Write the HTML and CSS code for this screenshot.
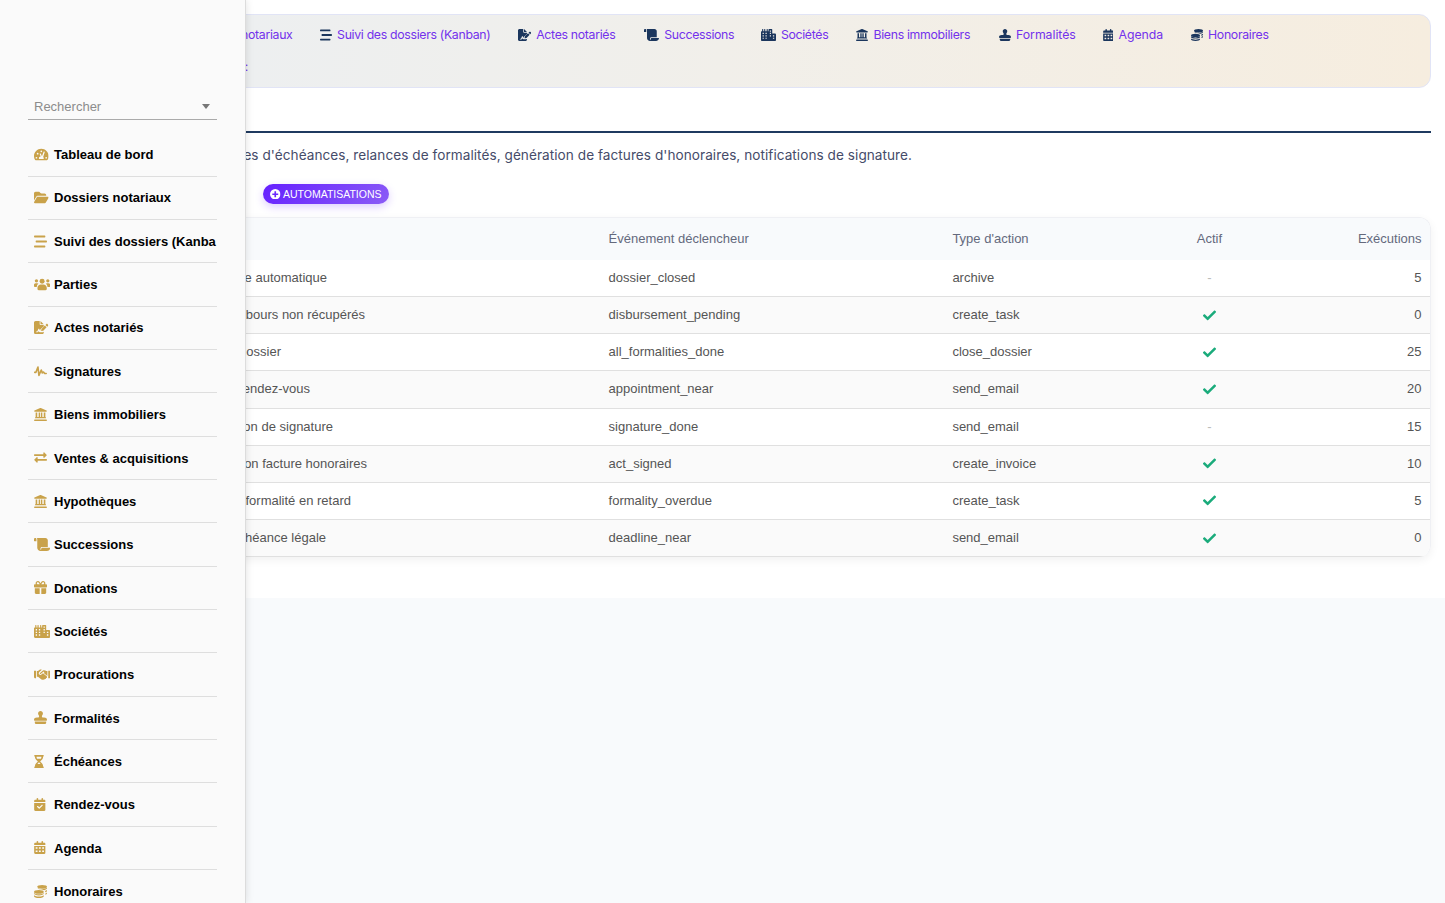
FILE: index.html
```html
<!DOCTYPE html>
<html lang="fr">
<head>
<meta charset="utf-8">
<title>Automatisations</title>
<link rel="stylesheet" href="styles.css">
</head>
<body>
<svg class="sprite" aria-hidden="true">
  <symbol id="gauge" viewBox="0 0 576 512"><path fill-rule="evenodd" d="M288 32C129 32 0 161 0 320c0 53 14 102 39 145 6 10 16 15 28 15h442c12 0 22-5 28-15 25-43 39-92 39-145C576 161 447 32 288 32zm0 64a34 34 0 1 1 0 68 34 34 0 0 1 0-68zM96 350a34 34 0 1 1 0 68 34 34 0 0 1 0-68zm48-160a34 34 0 1 1 0 68 34 34 0 0 1 0-68zm336 160a34 34 0 1 1 0 68 34 34 0 0 1 0-68zM405 138c14 4 21 18 17 31l-62 184c15 12 24 29 24 48 0 12-3 22-8 31H200c-5-9-8-19-8-31 0-35 28-64 63-64h12l-40-92c-5-12 0-26 12-31s26 0 31 12l42 97 62-169c4-13 18-20 31-16z"/></symbol>
  <symbol id="folder" viewBox="0 0 576 512"><path d="M88.7 223.8L0 375.8V96C0 60.7 28.7 32 64 32H181.5c17 0 33.3 6.7 45.3 18.7l26.5 26.5c12 12 28.3 18.7 45.3 18.7H416c35.3 0 64 28.7 64 64v32H144c-22.8 0-43.8 12.1-55.3 31.8zm27.6 16.1C122.1 230 132.6 224 144 224H544c11.5 0 22 6.1 27.7 16.1s5.7 22.2-.1 32.1l-112 192C453.9 474 443.4 480 432 480H32c-11.5 0-22-6.1-27.7-16.1s-5.7-22.2.1-32.1z"/></symbol>
  <symbol id="bars" viewBox="0 0 512 512"><path d="M0 60c0-24 10-40 26-40h396c16 0 26 16 26 40s-10 40-26 40H26C10 100 0 84 0 60zM64 256c0-24 10-40 26-40h396c16 0 26 16 26 40s-10 40-26 40H90c-16 0-26-16-26-40zM448 452c0 24-10 40-26 40H26c-16 0-26-16-26-40s10-40 26-40h396c16 0 26 16 26 40z"/></symbol>
  <symbol id="users" viewBox="0 0 640 512"><circle cx="320" cy="130" r="98"/><circle cx="96" cy="112" r="64"/><circle cx="544" cy="112" r="64"/><path d="M320 256h-50c-75 0-134 60-134 134v42c0 27 21 48 48 48h272c27 0 48-21 48-48v-42c0-74-60-134-134-134zM64 208h64c20 0 38 8 50 21-36 21-62 56-70 123H32c-18 0-32-14-32-32v-48c0-35 29-64 64-64zm512 0h-64c-20 0-38 8-50 21 36 21 62 56 70 123h76c18 0 32-14 32-32v-48c0-35-29-64-64-64z"/></symbol>
  <symbol id="sign" viewBox="0 0 576 512"><path fill-rule="evenodd" d="M64 0C29 0 0 29 0 64v384c0 35 29 64 64 64h256c35 0 64-29 64-64v-22l-44 14H232c-14 0-25-7-31-19l-13-24-16 30c-7 12-20 17-34 16H80v-32h48l38-89c7-17 36-20 45-2l31 60 13-53L384 202v-42H256c-18 0-32-14-32-32V0zm192 0v128h128zM550 139l-14-14c-16-16-41-16-56 0l-31 31 70 71 31-31c16-16 16-41 0-57zM304 301c-4 4-7 9-8 15l-15 60c-2 12 8 22 19 19l60-15c6-1 11-4 15-8l121-122-71-71z"/></symbol>
  <symbol id="wave" viewBox="0 0 512 512"><path fill="none" stroke="currentColor" stroke-width="64" stroke-linecap="round" stroke-linejoin="round" d="M28 288h48l80-210 38 330 92-210 40 112 46-34 50 58h58"/></symbol>
  <symbol id="bank" viewBox="0 0 512 512"><path d="M243 3L20 97C-4 108 4 144 32 144h448c28 0 36-36 12-47L269 3c-8-4-18-4-26 0zM64 176h64v176h56V176h56v176h32V176h56v176h56V176h64v182c18 9 28 20 28 42H36c0-22 10-33 28-42zM32 448h448c18 0 32 14 32 32s-14 32-32 32H32c-18 0-32-14-32-32s14-32 32-32z"/></symbol>
  <symbol id="swap" viewBox="0 0 512 512"><path d="M503 167l-96 96c-15 14-39 4-39-17v-54H24c-13 0-24-11-24-24v-16c0-13 11-24 24-24h344V74c0-21 25-32 39-17l96 96c12 4 12 10 0 14zM9 343l96-96c15-14 39-4 39 17v54h344c13 0 24 11 24 24v16c0 13-11 24-24 24H144v54c0 21-25 32-39 17L9 357c-12-4-12-10 0-14z"/></symbol>
  <symbol id="scroll" viewBox="0 0 640 512"><path d="M48 0C21 0 0 21 0 48v64c0 9 7 16 16 16h80V48C96 21 75 0 48 0zm208 412c0-33 25-60 58-60h230V96c0-53-43-96-96-96H111c11 14 17 30 17 48v336c0 79 74 142 155 125-17-20-27-48-27-97zM320 384c-18 0-32 14-32 32 0 54-43 96-96 96h320c71 0 128-57 128-128z"/></symbol>
  <symbol id="gift" viewBox="0 0 512 512"><path d="M190.500 68.800L225.300 128H152c-22.100 0-40-17.900-40-40s17.900-40 40-40h2.200c14.900 0 28.800 7.900 36.300 20.800zM64 88c0 14.400 3.500 28 9.600 40H32c-17.700 0-32 14.300-32 32v64c0 17.700 14.300 32 32 32H480c17.700 0 32-14.300 32-32V160c0-17.700-14.300-32-32-32H438.400c6.100-12 9.600-25.600 9.600-40c0-48.600-39.400-88-88-88h-2.200c-31.900 0-61.500 16.900-77.700 44.400L256 85.500l-24.100-41C215.700 16.900 186.100 0 154.200 0H152C103.400 0 64 39.400 64 88zm336 0c0 22.100-17.900 40-40 40H286.700l34.800-59.200C329.100 55.900 342.900 48 357.800 48H360c22.100 0 40 17.900 40 40zM32 288V464c0 26.500 21.500 48 48 48H224V288zM288 512H432c26.500 0 48-21.500 48-48V288H288z"/></symbol>
  <symbol id="city" viewBox="0 0 640 512"><path fill-rule="evenodd" d="M592 192H480V24c0-13-11-24-24-24H344c-13 0-24 11-24 24v72h-32V20c0-28-48-28-48 0v76h-56V20c0-28-48-28-48 0v76H96V20c0-28-48-28-48 0v76H24C11 96 0 107 0 120v344c0 27 21 48 48 48h544c27 0 48-21 48-48V240c0-27-21-48-48-48zM68 160h52v52H68zm0 104h52v52H68zm0 104h52v52H68zm124-208h52v52h-52zm0 104h52v52h-52zm0 104h52v52h-52zM376 60h50v52h-50zm0 100h50v52h-50zm0 104h50v52h-50zm132 0h56v52h-56zm0 104h56v52h-56z"/></symbol>
  <symbol id="handshake" viewBox="0 0 640 512"><path d="M0 112h80v288H32c-18 0-32-14-32-32zM560 112h80v256c0 18-14 32-32 32h-48zM112 120h42l58-44c25-19 66-20 94-6l-96 83c-34 30-31 79 0 103 28 23 66 18 94-6l49-42 148 121c17 16 19 36 6 51-8 9-19 13-30 13 3 31-24 48-51 43-14 23-42 29-66 13-31 19-65 11-91-12l-111-97h-46zM528 120v197l-145-119 27-23-31-36-107 91c-25 22-57-8-35-29l116-100c12-10 26-16 42-16 27 0 52 8 74 24l17 11z"/></symbol>
  <symbol id="stamp" viewBox="0 0 512 512"><path d="M312 202c0-17 9-33 20-47 13-17 20-37 20-59 0-53-43-96-96-96s-96 43-96 96c0 22 8 42 20 59 11 14 20 30 20 47v22c0 18-14 32-32 32h-56C50 256 0 290 0 344c0 22 14 40 32 40h448c18 0 32-18 32-40 0-54-50-88-112-88h-56c-18 0-32-14-32-32zM32 416h448v32c0 35-29 64-64 64H96c-35 0-64-29-64-64z"/></symbol>
  <symbol id="hourglass" viewBox="0 0 384 512"><path fill-rule="evenodd" d="M32 0C14 0 0 14 0 32s14 32 32 32v11c0 42 17 83 47 113l68 68-68 68c-30 30-47 71-47 113v11c-18 0-32 14-32 32s14 32 32 32h320c18 0 32-14 32-32s-14-32-32-32v-11c0-42-17-83-47-113l-68-68 68-68c30-30 47-71 47-113V64c18 0 32-14 32-32S370 0 352 0zm64 64h192c0 36-8 58-22 80H118c-14-22-22-44-22-80zm34 288 62-62 62 62z"/></symbol>
  <symbol id="calcheck" viewBox="0 0 448 512"><path fill-rule="evenodd" d="M128 0c17.700 0 32 14.300 32 32V64H288V32c0-17.700 14.300-32 32-32s32 14.300 32 32V64h48c26.500 0 48 21.500 48 48v48H0V112C0 85.500 21.500 64 48 64H96V32c0-17.700 14.300-32 32-32zM0 192H448V464c0 26.500-21.500 48-48 48H48c-26.500 0-48-21.500-48-48zM329 305c22-23-11-56-34-34l-95 95-47-47c-23-22-56 11-34 34l64 64c10 9 25 9 34 0z"/></symbol>
  <symbol id="calendar" viewBox="0 0 448 512"><path fill-rule="evenodd" d="M128 0c17.700 0 32 14.300 32 32V64H288V32c0-17.700 14.300-32 32-32s32 14.300 32 32V64h48c26.500 0 48 21.500 48 48v48H0V112C0 85.500 21.500 64 48 64H96V32c0-17.700 14.300-32 32-32zM0 192H448V464c0 26.500-21.500 48-48 48H48c-26.500 0-48-21.500-48-48zM60 244v66h72v-66zm128 0v66h72v-66zm128 0v66h72v-66zM60 372v66h72v-66zm128 0v66h72v-66zm128 0v66h72v-66z"/></symbol>
  <symbol id="coins" viewBox="0 0 512 512"><ellipse cx="320" cy="72" rx="192" ry="72"/><path d="M150 116c42 30 100 42 170 42 86 0 158-20 192-56v30c0 34-48 60-116 72-50-30-120-40-190-36-38-14-56-30-56-52zM430 240c34-8 62-22 82-40v30c0 26-24 46-66 60 0-20-6-36-16-50zM448 330c26-8 48-20 64-34v32c0 24-22 44-64 58z"/><ellipse cx="192" cy="272" rx="192" ry="72"/><path d="M0 314c38 32 108 50 192 50s154-18 192-50v24c0 40-86 72-192 72S0 378 0 338zM0 404c38 32 108 50 192 50s154-18 192-50v36c0 40-86 72-192 72S0 480 0 440z"/></symbol>
  <symbol id="check" viewBox="0 0 512 512"><path d="M503 138 205 436c-13 12-33 12-45 0L9 285c-12-12-12-33 0-45l26-26c12-12 32-12 45 0l103 103L432 67c13-12 33-12 45 0l26 26c12 12 12 32 0 45z"/></symbol>
  <symbol id="plus" viewBox="0 0 512 512"><path fill-rule="evenodd" d="M256 0a256 256 0 1 0 0 512 256 256 0 0 0 0-512zM216 112h80v104h104v80H296v104h-80V296H112v-80h104z"/></symbol>
</svg>

<main class="page">
  <nav class="topnav">
    <div class="topnav-row">
      <a class="link first"><span class="label">Dossiers notariaux</span></a>
      <a class="link"><svg class="ico"><use href="#bars"/></svg><span class="label" style="width:153px">Suivi des dossiers (Kanban)</span></a>
      <a class="link"><svg class="ico wide"><use href="#sign"/></svg><span class="label" style="width:80.500px">Actes notariés</span></a>
      <a class="link"><svg class="ico widest"><use href="#scroll"/></svg><span class="label" style="width:69px">Successions</span></a>
      <a class="link"><svg class="ico widest"><use href="#city"/></svg><span class="label" style="width:48px">Sociétés</span></a>
      <a class="link"><svg class="ico"><use href="#bank"/></svg><span class="label" style="width:98px">Biens immobiliers</span></a>
      <a class="link"><svg class="ico"><use href="#stamp"/></svg><span class="label open" style="width:59px">Formalités</span></a>
      <a class="link"><svg class="ico narrow"><use href="#calendar"/></svg><span class="label open" style="width:45px">Agenda</span></a>
      <a class="link"><svg class="ico"><use href="#coins"/></svg><span class="label" style="width:61px">Honoraires</span></a>
    </div>
    <div class="topnav-row second"><a class="link first"><span class="label">Reporting :</span></a></div>
  </nav>
  <div class="rule"></div>
  <p class="intro">Alertes d'échéances, relances de formalités, génération de factures d'honoraires, notifications de signature.</p>
  <div class="actions"><a class="pill"><svg class="ico"><use href="#plus"/></svg><span>AUTOMATISATIONS</span></a></div>
  <section class="grid">
    <div class="row head"><span></span><span>Événement déclencheur</span><span>Type d'action</span><span class="mid">Actif</span><span class="num">Exécutions</span></div>
    <div class="row"><span class="name" style="width:313px">Archivage automatique</span><span>dossier_closed</span><span>archive</span><span class="mid off">-</span><span class="num">5</span></div>
    <div class="row"><span class="name" style="width:351px">Débours non récupérés</span><span>disbursement_pending</span><span>create_task</span><span class="mid"><svg class="ico"><use href="#check"/></svg></span><span class="num">0</span></div>
    <div class="row"><span class="name" style="width:267px">Clôture dossier</span><span>all_formalities_done</span><span>close_dossier</span><span class="mid"><svg class="ico"><use href="#check"/></svg></span><span class="num">25</span></div>
    <div class="row"><span class="name" style="width:296px">Rappel rendez-vous</span><span>appointment_near</span><span>send_email</span><span class="mid"><svg class="ico"><use href="#check"/></svg></span><span class="num">20</span></div>
    <div class="row"><span class="name" style="width:319px">Notification de signature</span><span>signature_done</span><span>send_email</span><span class="mid off">-</span><span class="num">15</span></div>
    <div class="row"><span class="name" style="width:353px">Génération facture honoraires</span><span>act_signed</span><span>create_invoice</span><span class="mid"><svg class="ico"><use href="#check"/></svg></span><span class="num">10</span></div>
    <div class="row"><span class="name" style="width:337px">Relance formalité en retard</span><span>formality_overdue</span><span>create_task</span><span class="mid"><svg class="ico"><use href="#check"/></svg></span><span class="num">5</span></div>
    <div class="row"><span class="name" style="width:312px">Alerte échéance légale</span><span>deadline_near</span><span>send_email</span><span class="mid"><svg class="ico"><use href="#check"/></svg></span><span class="num">0</span></div>
  </section>
</main>

<aside class="sidebar">
  <div class="search"><span>Rechercher</span><i class="caret"></i></div>
  <ul class="menu">
    <li><svg class="ico wide"><use href="#gauge"/></svg><span>Tableau de bord</span></li>
    <li><svg class="ico wide"><use href="#folder"/></svg><span>Dossiers notariaux</span></li>
    <li><svg class="ico"><use href="#bars"/></svg><span>Suivi des dossiers (Kanba</span></li>
    <li><svg class="ico widest"><use href="#users"/></svg><span>Parties</span></li>
    <li><svg class="ico wide"><use href="#sign"/></svg><span>Actes notariés</span></li>
    <li><svg class="ico"><use href="#wave"/></svg><span>Signatures</span></li>
    <li><svg class="ico"><use href="#bank"/></svg><span>Biens immobiliers</span></li>
    <li><svg class="ico"><use href="#swap"/></svg><span>Ventes &amp; acquisitions</span></li>
    <li><svg class="ico"><use href="#bank"/></svg><span>Hypothèques</span></li>
    <li><svg class="ico widest"><use href="#scroll"/></svg><span>Successions</span></li>
    <li><svg class="ico"><use href="#gift"/></svg><span>Donations</span></li>
    <li><svg class="ico widest"><use href="#city"/></svg><span>Sociétés</span></li>
    <li><svg class="ico widest"><use href="#handshake"/></svg><span>Procurations</span></li>
    <li><svg class="ico"><use href="#stamp"/></svg><span>Formalités</span></li>
    <li><svg class="ico thin"><use href="#hourglass"/></svg><span>Échéances</span></li>
    <li><svg class="ico narrow"><use href="#calcheck"/></svg><span>Rendez-vous</span></li>
    <li><svg class="ico narrow"><use href="#calendar"/></svg><span>Agenda</span></li>
    <li><svg class="ico"><use href="#coins"/></svg><span>Honoraires</span></li>
  </ul>
</aside>
</body>
</html>
```
FILE: styles.css
```css
* { box-sizing: border-box; }
html, body { margin: 0; height: 100%; overflow: hidden; }
body { background: #f8fafc; font: 13px/18px "Liberation Sans", Arial, sans-serif; color: #555; }
.sprite { position: absolute; width: 0; height: 0; }
.ico { display: block; flex: none; width: 1em; height: 1em; fill: currentColor; }
.ico.wide { width: 1.125em; }
.ico.widest { width: 1.25em; }
.ico.narrow { width: .9em; }
.ico.thin { width: .77em; }

.page { height: 598px; padding: 14px 14px 0; background: #fff; }
.topnav { height: 74px; padding-top: 10px; border: 1px solid #e1e4f6; border-radius: 12px; background: linear-gradient(90deg, #ebeff3, #f1efea 50%, #f6eddf); font: 12.3px/20px Inter, sans-serif; color: #7331ec; }
.topnav-row { display: flex; gap: 27.6px; height: 20px; }
.topnav-row.second { margin-top: 12px; }
.link { display: flex; align-items: center; gap: 5px; }
.link .ico { margin-bottom: 1px; font-size: 12px; color: #1b365d; }
.label { white-space: nowrap; letter-spacing: -.32px; }
.label.open { letter-spacing: -.05px; }
.link.first { justify-content: flex-end; width: 277.5px; }
.second .link.first { width: 233px; }
.rule { height: 2px; margin-top: 43px; background: #1f3a60; }
.intro { display: flex; justify-content: flex-end; width: 898px; margin: 12px 0 0; font: 13.6px/20px Inter, sans-serif; letter-spacing: .05px; white-space: nowrap; color: #454b69; }
.actions { display: flex; padding: 19px 0 0 249px; }
.pill { display: flex; align-items: center; justify-content: center; gap: 2px; width: 126px; height: 20px; border-radius: 10px; background: linear-gradient(135deg, #651fff, #8b5cf6); box-shadow: 0 3px 9px rgba(101, 31, 255, .22); color: #fff; font-size: 10.5px; }

.grid { margin-top: 13px; border-radius: 12px; overflow: hidden; border: 1px solid #eff0f4; border-width: 1px 1px 0 0; box-shadow: 0 3px 10px rgba(0, 0, 0, .06); }
.row { display: grid; grid-template-columns: 594.6px 343.8px 205px 104px 1fr; align-items: center; height: 37.15px; padding-right: 8.500px; border-bottom: 1.500px solid #e0e0e0; background: #fff; }
.row:nth-child(odd) { background: #fafafa; }
.row.head { height: 42px; border: 0; background: #f8fafc; color: #64697c; }
.name { display: flex; justify-content: flex-end; white-space: nowrap; }
.mid { display: flex; justify-content: center; }
.mid .ico { color: #1aab7b; }
.off { color: #bbb; }
.num { text-align: right; }

.sidebar { position: absolute; left: 0; top: 0; width: 246px; height: 903px; padding: 92px 28px 0; overflow: hidden; background: #fafafa; border-right: 1px solid #dcdcdc; box-shadow: 0 0 8px rgba(0, 0, 0, .12); }
.search { display: flex; align-items: center; justify-content: space-between; height: 28px; padding: 2px 7px 0 6px; border-bottom: 1px solid #aaa; color: #8c8c8c; }
.caret { border: 4.5px solid transparent; border-top: 5.500px solid #777; border-bottom: 0; }
.menu { margin: 13.2px 0 0; padding: 0; list-style: none; font-weight: bold; color: #000; }
.menu li { display: grid; grid-template-columns: 20px 1fr; align-items: center; height: 43.35px; padding-left: 6px; border-bottom: 1px solid #dedede; white-space: nowrap; }
.menu span { padding-top: 1.5px; }
.menu .ico { color: #c9a24a; }
```
